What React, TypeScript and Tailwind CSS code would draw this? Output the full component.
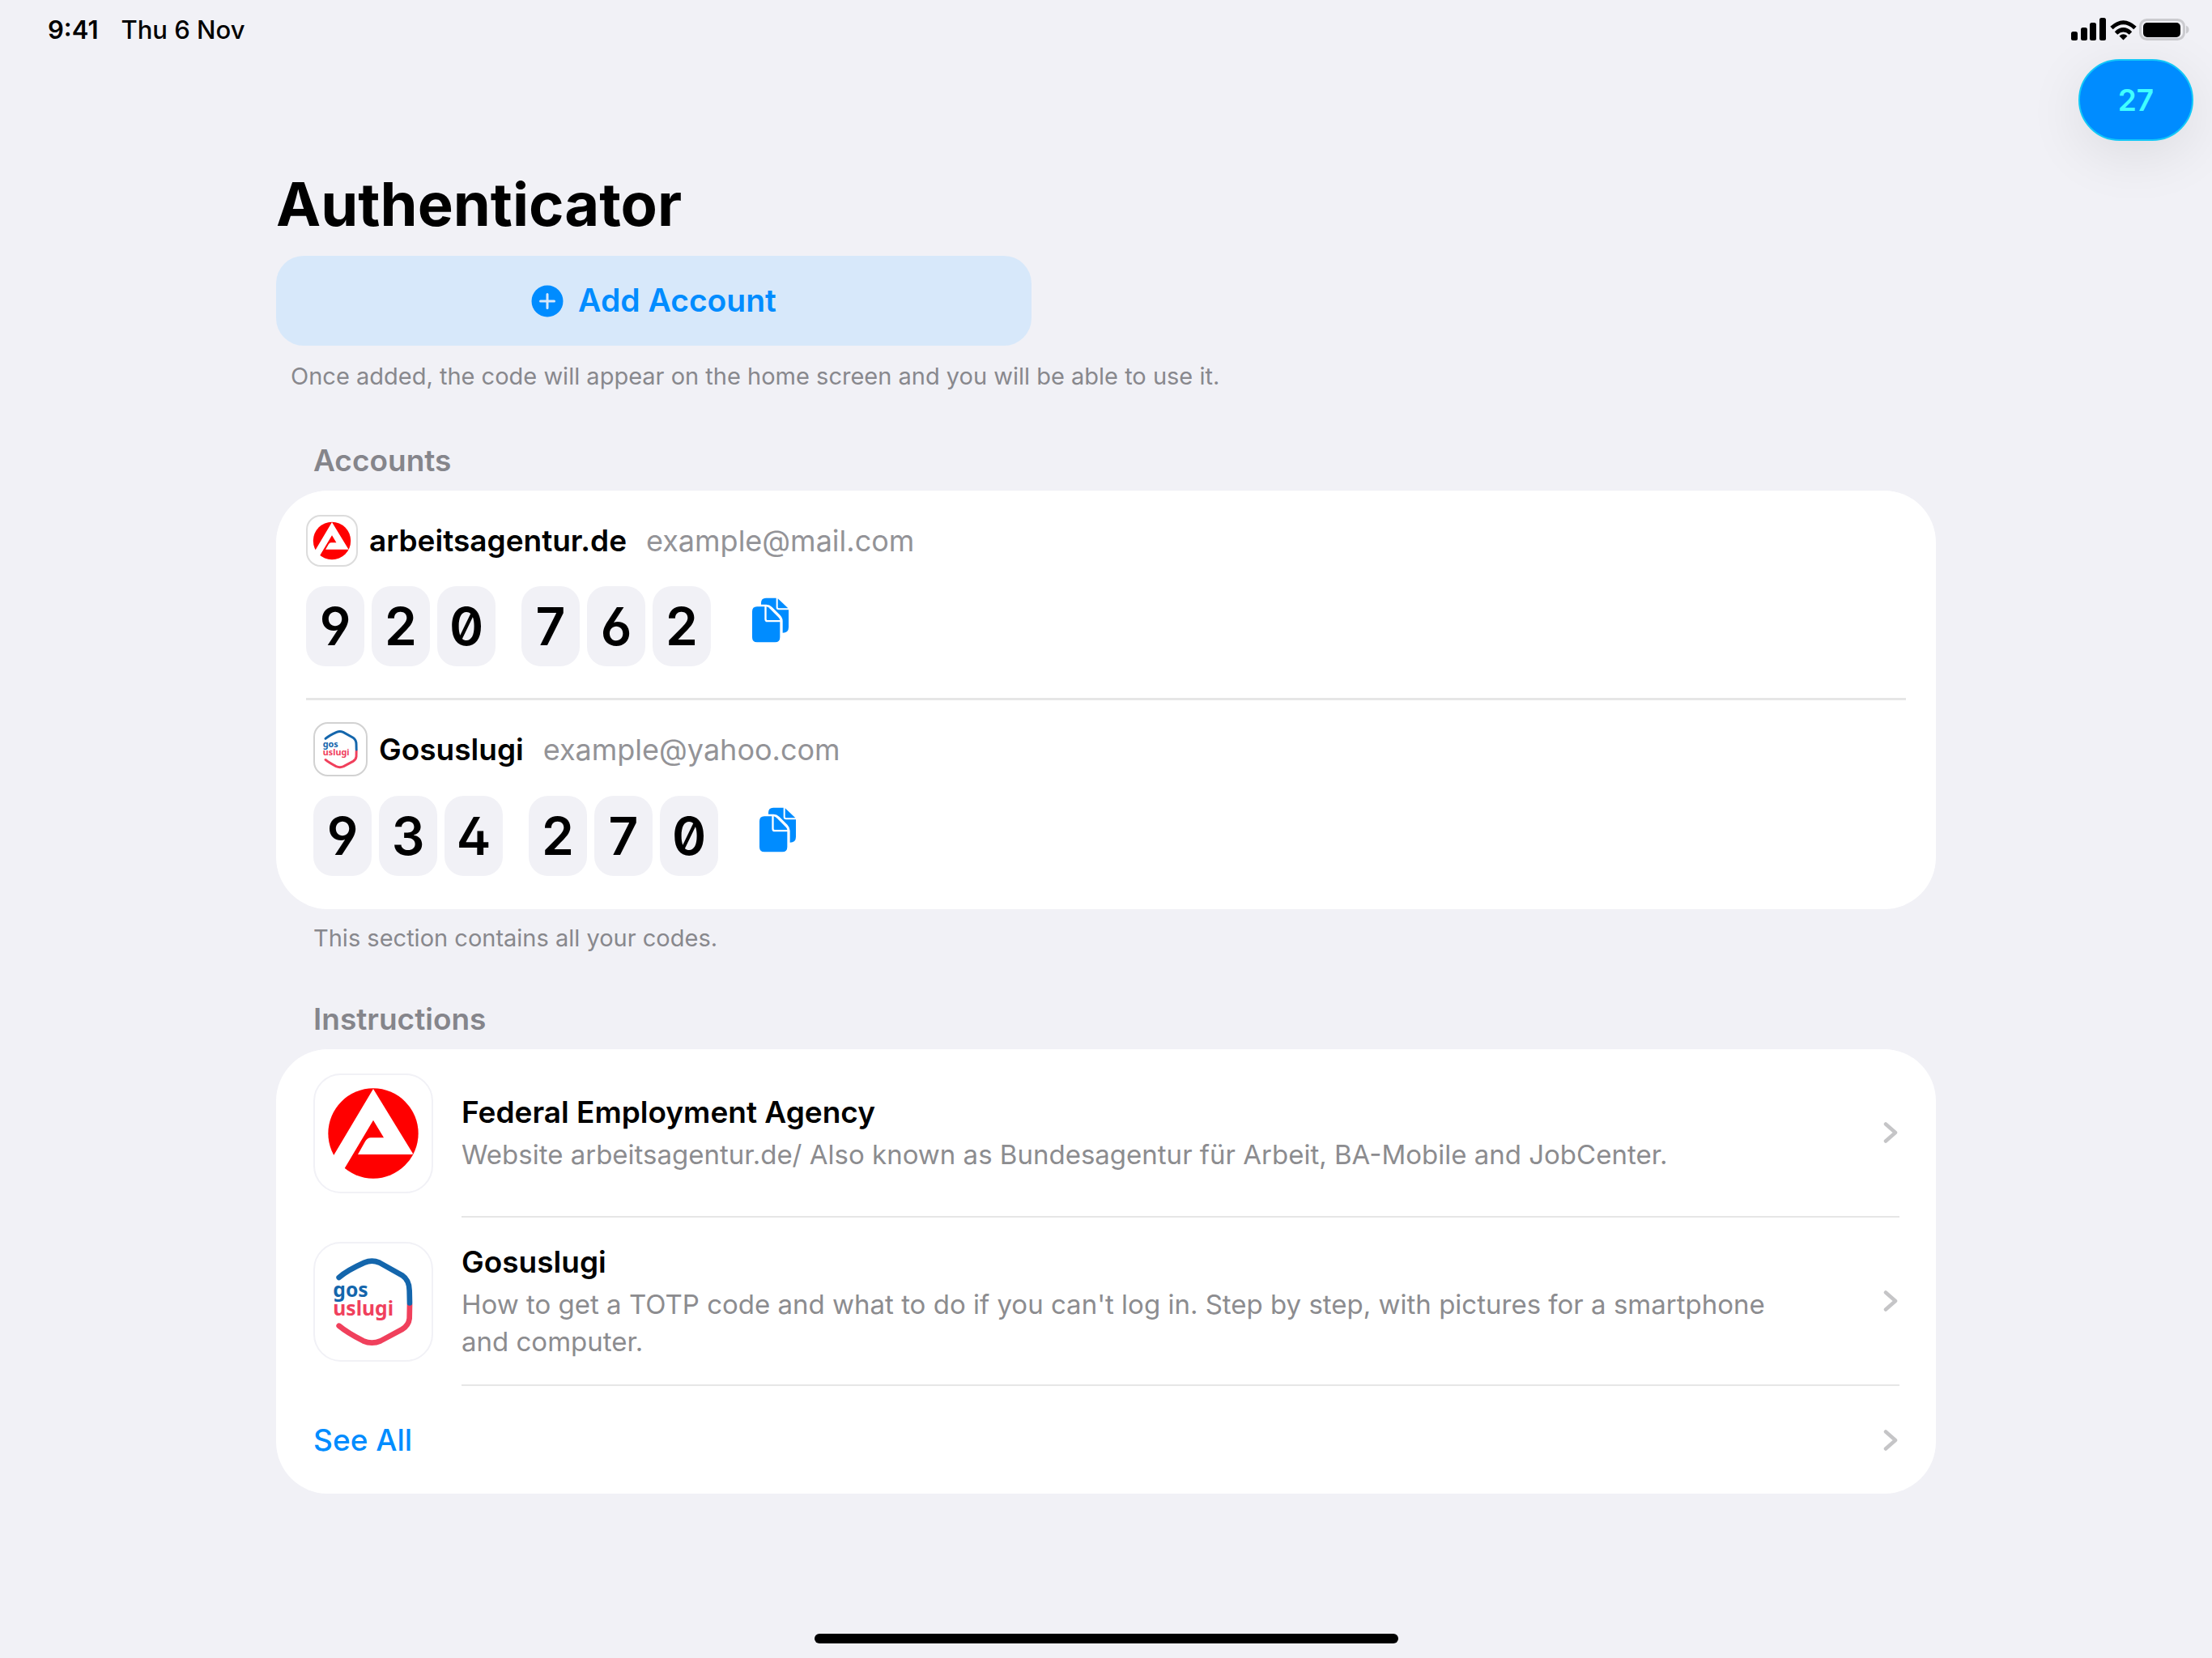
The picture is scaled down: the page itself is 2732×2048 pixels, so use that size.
import { useState } from "react";

type Account = {
  id: string;
  name: string;
  email: string;
  code: string;
  logo: "agency" | "gosuslugi";
};

type Instruction = {
  id: string;
  title: string;
  description: string;
  logo: "agency" | "gosuslugi";
};

const accounts: Account[] = [
  { id: "arbeitsagentur", name: "arbeitsagentur.de", email: "example@mail.com", code: "920762", logo: "agency" },
  { id: "gosuslugi", name: "Gosuslugi", email: "example@yahoo.com", code: "934270", logo: "gosuslugi" },
];

const instructions: Instruction[] = [
  {
    id: "agency",
    title: "Federal Employment Agency",
    description: "Website arbeitsagentur.de/ Also known as Bundesagentur für Arbeit, BA-Mobile and JobCenter.",
    logo: "agency",
  },
  {
    id: "gosuslugi",
    title: "Gosuslugi",
    description:
      "How to get a TOTP code and what to do if you can't log in. Step by step, with pictures for a smartphone and computer.",
    logo: "gosuslugi",
  },
];

function AgencyLogo() {
  return (
    <svg viewBox="5 5 432 432" className="size-full" aria-hidden="true">
      <circle cx="221" cy="221" r="167" fill="#ff0000" />
      <path
        d="M221 56 L368 296 L366 299 H164 L191 251 Q199 237 212 237 H260 L221 172 L108 362 L66 316 Z"
        fill="#ffffff"
      />
    </svg>
  );
}

function GosuslugiLogo() {
  return (
    <svg viewBox="5 5 432 432" className="size-full" aria-hidden="true">
      <g fill="none" strokeWidth="20" strokeLinecap="round">
        <path d="M356 231 L355 283 Q352 309 328 323 L248 366 Q216 380 184 366 Q125 336 94 310" stroke="#f0405c" />
        <path d="M94 131 Q125 104 188 76 Q216 64 244 76 L328 123 Q355 141 355 180 L356 225" stroke="#1466ac" />
      </g>
      <text fontFamily="Noto Sans, sans-serif" fontWeight="700" fontSize="74">
        <tspan x="72" y="204" fill="#1466ac">gos</tspan>
        <tspan x="72" y="273" fill="#f0405c">uslugi</tspan>
      </text>
    </svg>
  );
}

function Logo({ name }: { name: Account["logo"] }) {
  return name === "agency" ? <AgencyLogo /> : <GosuslugiLogo />;
}

function CopyIcon() {
  return (
    <svg viewBox="0 0 135 168" className="h-14 w-[45px]" fill="#008cff" aria-hidden="true">
      <path d="M33 26 V20 Q33 2 51 2 H89 V36 Q89 46 99 46 H135 V110 Q135 131 113 131 V88 Q113 76 104 66 L74 36 Q64 26 52 26 Z" />
      <path d="M95 4 L133 40 H99 Q95 40 95 36 Z" />
      <path d="M18 34 H46 V80 Q46 91 57 91 H103 V148 Q103 166 85 166 H18 Q0 166 0 148 V52 Q0 34 18 34 Z" />
      <path d="M53 34 Q60 36 66 42 L98 74 Q103 80 103 84 H57 Q53 84 53 80 Z" />
    </svg>
  );
}

function Chevron() {
  return (
    <svg viewBox="0 0 20 28" className="h-7 w-5 shrink-0" fill="none" aria-hidden="true">
      <path d="M3 3.500 L15 14 L3 24.500" stroke="#c5c5c7" strokeWidth="4.500" strokeLinecap="round" strokeLinejoin="round" />
    </svg>
  );
}

function StatusBar() {
  return (
    <header className="flex h-[73px] items-center justify-between pl-[59px] pr-7">
      <div className="flex items-center gap-7 text-[31px] leading-10">
        <span className="font-semibold">9:41</span>
        <span className="font-medium">Thu 6 Nov</span>
      </div>
      <svg viewBox="0 0 146 28" className="mb-[2px] h-7 w-[146px]" aria-hidden="true">
        <rect x="0" y="17" width="8" height="11" rx="2.500" />
        <rect x="12" y="12" width="8" height="16" rx="2.500" />
        <rect x="23" y="6" width="8" height="22" rx="2.500" />
        <rect x="35" y="0" width="8" height="28" rx="2.500" />
        <g fill="none" stroke="#000000" strokeWidth="5">
          <path d="M50 12.500 Q64.500 -1 79 12.500" />
          <path d="M55.500 19 Q64.500 10.500 73.500 19" />
        </g>
        <path d="M59.500 22.500 Q64.500 18 69.500 22.500 L64.500 27.500 Z" />
        <rect x="85.500" y="2.500" width="54" height="24" rx="8" fill="none" stroke="#cbcbcf" strokeWidth="3" />
        <rect x="89" y="6" width="46" height="18" rx="5" />
        <path d="M142 9.500 Q145.500 11 145.500 14.500 Q145.500 18 142 19.500 Z" fill="#cbcbcf" />
      </svg>
    </header>
  );
}

function CodeDigits({ code }: { code: string }) {
  return (
    <div className="flex gap-8">
      {[code.slice(0, 3), code.slice(3)].map((group, groupIndex) => (
        <div key={groupIndex} className="flex gap-[9px]">
          {group.split("").map((digit, index) => (
            <span
              key={index}
              className="flex h-[99px] w-[72px] items-center justify-center rounded-[24px] bg-[#f1f1f6] text-[64px] leading-none font-semibold [font-feature-settings:'zero','cv02','cv03','cv04']"
            >
              {digit}
            </span>
          ))}
        </div>
      ))}
    </div>
  );
}

function AccountRow({ account }: { account: Account }) {
  const isAgency = account.logo === "agency";
  const [copied, setCopied] = useState(false);

  const handleCopy = () => {
    navigator.clipboard?.writeText(account.code);
    setCopied(true);
  };

  return (
    <li
      className={
        isAgency
          ? "mx-[37px] border-b-[3px] border-[#e6e6e6] pt-[30px] pb-[39px]"
          : "mx-[46px] pt-[27px] pb-[41px]"
      }
    >
      <div className="flex items-center">
        <div
          className={
            isAgency
              ? "size-16 overflow-hidden rounded-[18px] border-2 border-[#dcdcdc]"
              : "size-[67px] overflow-hidden rounded-[18px] border-2 border-[#d2d2d2]"
          }
        >
          <Logo name={account.logo} />
        </div>
        <span className="ml-[14px] text-[37px] leading-[48px] font-semibold">{account.name}</span>
        <span className="ml-6 text-[36px] leading-[48px] text-[#939397]">{account.email}</span>
      </div>
      <div className="mt-6 flex items-start">
        <CodeDigits code={account.code} />
        <button
          type="button"
          onClick={handleCopy}
          aria-label={copied ? "Copied" : "Copy code"}
          className="mt-[14px] ml-[51px] cursor-pointer"
        >
          <CopyIcon />
        </button>
      </div>
    </li>
  );
}

function InstructionRow({ instruction }: { instruction: Instruction }) {
  return (
    <li>
      <a href={`#${instruction.id}`} className="flex pl-[46px] pr-[45px]">
        <div className="my-[30px] size-[148px] shrink-0 overflow-hidden rounded-[34px] border-2 border-[#f1f1f6]">
          <Logo name={instruction.logo} />
        </div>
        <div className="ml-[35px] flex flex-1 items-center justify-between border-b-2 border-[#e6e6e6]">
          <div className="flex max-w-[1650px] flex-col gap-[2px] pb-[2px]">
            <h3 className="text-[37px] leading-[54px] font-semibold">{instruction.title}</h3>
            <p className="text-[33px] leading-[46px] text-[#8c8c8f]">{instruction.description}</p>
          </div>
          <Chevron />
        </div>
      </a>
    </li>
  );
}

export default function App() {
  return (
    <div className="flex min-h-screen flex-col bg-[#f1f1f6] font-['Inter',sans-serif] text-black">
      <StatusBar />
      <div className="flex justify-end pr-[23px]">
        <button
          type="button"
          className="h-[101px] w-[142px] rounded-full border-2 border-[#12c8f8] bg-[#008cff] text-[37px] font-semibold text-[#40ffff] shadow-[0_16px_70px_rgba(0,0,0,0.09)]"
        >
          27
        </button>
      </div>

      <main className="mx-auto w-full max-w-[2050px]">
        <h1 className="mt-[30px] text-[74px] leading-[96px] font-bold">Authenticator</h1>
        <button
          type="button"
          className="mt-4 flex h-[111px] w-full max-w-[933px] items-center justify-center gap-[18px] rounded-[34px] bg-[#d7e8fa] text-[39px] font-semibold text-[#008cff]"
        >
          <svg viewBox="0 0 40 40" className="size-10" aria-hidden="true">
            <circle cx="20" cy="20" r="19.500" fill="#008cff" />
            <path d="M20 11.500 V28.500 M11.500 20 H28.500" stroke="#d7e8fa" strokeWidth="3" strokeLinecap="round" />
          </svg>
          Add Account
        </button>
        <p className="mt-[18px] ml-[18px] text-[29px] leading-10 text-[#88888d]">
          Once added, the code will appear on the home screen and you will be able to use it.
        </p>

        <section>
          <h2 className="mt-[60px] ml-[46px] text-[37px] leading-[48px] font-semibold text-[#85858b]">Accounts</h2>
          <ul className="mt-[13px] rounded-[64px] bg-white">
            {accounts.map((account) => (
              <AccountRow key={account.id} account={account} />
            ))}
          </ul>
          <p className="mt-4 ml-[46px] text-[29px] leading-10 text-[#88888d]">This section contains all your codes.</p>
        </section>

        <section>
          <h2 className="mt-14 ml-[46px] text-[37px] leading-[48px] font-semibold text-[#85858b]">Instructions</h2>
          <ul className="mt-[13px] rounded-[64px] bg-white">
            {instructions.map((instruction) => (
              <InstructionRow key={instruction.id} instruction={instruction} />
            ))}
            <li>
              <a href="#all" className="flex h-[133px] items-center justify-between pl-[46px] pr-[45px]">
                <span className="text-[37px] leading-[48px] font-medium text-[#008cff]">See All</span>
                <Chevron />
              </a>
            </li>
          </ul>
        </section>
      </main>

      <div className="mx-auto mt-auto mb-[18px] h-3 w-[721px] rounded-full bg-black" />
    </div>
  );
}
